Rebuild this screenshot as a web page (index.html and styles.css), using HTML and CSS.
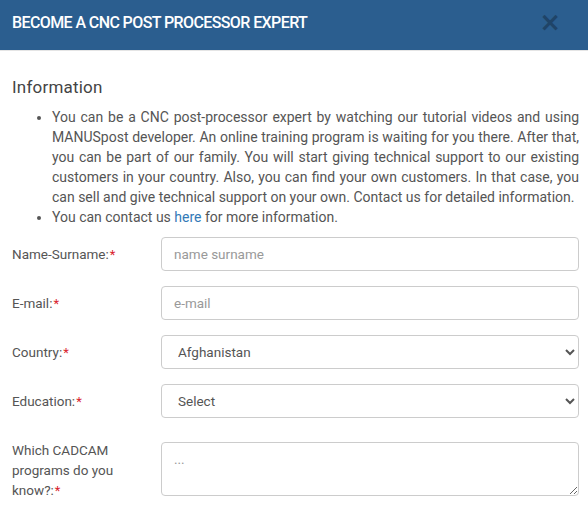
FILE: index.html
```html
<!DOCTYPE html>
<html lang="en">
  <head>
    <meta charset="UTF-8" />
    <meta name="viewport" content="width=device-width, initial-scale=1.0" />
    <title>Become a CNC Post Processor Expert</title>
    <link rel="stylesheet" href="styles.css">
  </head>
  <body>
    <div class="modal">
      <div class="modal-header">
        <h4 class="modal-title">BECOME A CNC POST PROCESSOR EXPERT</h4>
        <button class="close" type="button">&times;</button>
      </div>

      <div class="modal-body">
        <h3 class="info-title">Information</h3>
        <ul class="info-list">
          <li>You can be a CNC post-processor expert by watching our tutorial videos and using MANUSpost developer. An online training program is waiting for you there. After that, you can be part of our family. You will start giving technical support to our existing customers in your country. Also, you can find your own customers. In that case, you can sell and give technical support on your own. Contact us for detailed information.</li>
          <li>You can contact us <a href="#">here</a> for more information.</li>
        </ul>

        <form class="expert-form">
          <div class="form-row">
            <label for="name">Name-Surname:<span class="req">*</span></label>
            <input type="text" id="name" placeholder="name surname" />
          </div>
          <div class="form-row">
            <label for="email">E-mail:<span class="req">*</span></label>
            <input type="text" id="email" placeholder="e-mail" />
          </div>
          <div class="form-row">
            <label for="country">Country:<span class="req">*</span></label>
            <select id="country">
              <option>Afghanistan</option>
              <option>Albania</option>
              <option>Algeria</option>
            </select>
          </div>
          <div class="form-row">
            <label for="education">Education:<span class="req">*</span></label>
            <select id="education">
              <option>Select</option>
              <option>High School</option>
              <option>University</option>
            </select>
          </div>
          <div class="form-row">
            <label for="cadcam">Which CADCAM programs do you know?:<span class="req">*</span></label>
            <textarea id="cadcam" placeholder="..."></textarea>
          </div>
        </form>
      </div>
    </div>
  </body>
</html>
```

FILE: styles.css
```css
body {
  font-family: Roboto, "Liberation Sans", sans-serif;
  margin: 0;
  padding: 0;
  background-color: #fff;
  color: #555;
}
.modal {
  width: 588px;
}
.modal-header {
  background-color: #2b5e8f;
  height: 50px;
  border-bottom: 1px solid #e5e5e5;
  display: flex;
  align-items: center;
  justify-content: space-between;
  padding: 0 27px 0 12px;
}
.modal-title {
  margin: 0 0 6px;
  color: #fff;
  font-size: 16px;
  font-weight: 500;
  letter-spacing: -0.6px;
}
.close {
  background: none;
  border: none;
  padding: 0;
  margin: 0 0 6px;
  font-family: "DejaVu Sans", sans-serif;
  font-size: 26px;
  font-weight: bold;
  line-height: 1;
  color: #1f4468;
  cursor: pointer;
}
.modal-body {
  padding: 26px 9px 20px 12px;
}
.info-title {
  margin: 0;
  font-size: 17px;
  font-weight: 400;
  line-height: 20px;
  color: #444;
  letter-spacing: 0.2px;
}
.info-list {
  margin: 10px 0 10px;
  padding-left: 40px;
  font-size: 14px;
  line-height: 20px;
  text-align: justify;
}
.info-list a {
  color: #337ab7;
  text-decoration: none;
}
.form-row {
  display: grid;
  grid-template-columns: 149px 1fr;
  margin-bottom: 15px;
}
.form-row label {
  font-size: 13.5px;
  line-height: 20px;
  padding: 7px 20px 0 0;
  color: #555;
}
.req {
  color: #d9232d;
  font-size: 13px;
  margin-left: 1px;
}
.form-row input,
.form-row select,
.form-row textarea {
  font-family: Roboto, "Liberation Sans", sans-serif;
  font-size: 13.5px;
  color: #555;
  height: 34px;
  border: 1px solid #ccc;
  border-radius: 4px;
  background-color: #fff;
  box-sizing: border-box;
  width: 100%;
}
.form-row input {
  padding: 6px 12px;
}
.form-row select {
  padding: 6px 8px 6px 12px;
}
.form-row textarea {
  height: 54px;
  margin-top: 9px;
  padding: 8px 12px;
}
.form-row input::placeholder,
.form-row textarea::placeholder {
  color: #999;
}
```
